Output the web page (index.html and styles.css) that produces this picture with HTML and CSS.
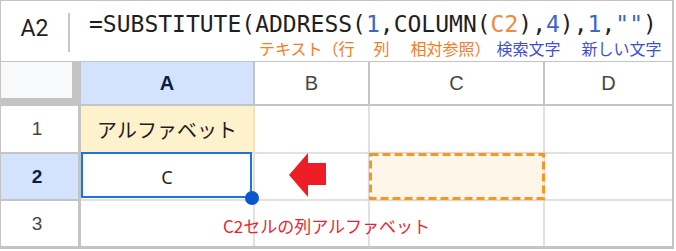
FILE: index.html
```html
<!DOCTYPE html>
<html>
<head>
  <title>SUBSTITUTE ADDRESS</title>
  <meta charset="UTF-8">
  <link rel="stylesheet" href="styles.css">
</head>
<body>
  <div class="sheet">
    <div class="formula-bar">
      <div class="name-box">A2</div>
      <div class="vsep"></div>
      <div class="formula">
        <div class="expr">=SUBSTITUTE(ADDRESS(<span class="num">1</span>,COLUMN(<span class="ref">C2</span>),<span class="num">4</span>),<span class="num">1</span>,<span class="num">""</span>)</div>
        <div class="notes">
          <span class="orange">テキスト（行</span><span class="orange gap1">列</span><span class="orange gap2">相対参照）</span><span class="blue gap3">検索文字</span><span class="blue gap4">新しい文字</span>
        </div>
      </div>
    </div>

    <div class="grid">
      <div class="corner"><div class="corner-box"></div></div>
      <div class="col-head active">A</div>
      <div class="col-head">B</div>
      <div class="col-head">C</div>
      <div class="col-head last">D</div>

      <div class="row-head">1</div>
      <div class="cell label-cell">アルファベット</div>
      <div class="cell"></div>
      <div class="cell"></div>
      <div class="cell last"></div>

      <div class="row-head active">2</div>
      <div class="cell selected">C<span class="handle"></span></div>
      <div class="cell arrow-cell">
        <svg class="arrow" width="38" height="45" viewBox="0 0 38 45">
          <polygon points="0,22 19,0 19,10 37,10 37,32 19,32 19,44" fill="#ee1c25"/>
        </svg>
      </div>
      <div class="cell target">
        <svg class="dash" width="176" height="47" viewBox="0 0 176 47">
          <rect x="1.5" y="1.5" width="173" height="44" fill="#fdf5e8" stroke="#f7971f" stroke-width="3" stroke-dasharray="8 4"/>
        </svg>
      </div>
      <div class="cell last"></div>

      <div class="row-head bottom">3</div>
      <div class="cell bottom note-cell"><span class="note">C2セルの列アルファベット</span></div>
      <div class="cell bottom"></div>
      <div class="cell bottom"></div>
      <div class="cell bottom last"></div>
    </div>
  </div>
</body>
</html>
```

FILE: styles.css
```css
body {
  margin: 0;
  background-color: #fff;
  font-family: "Liberation Sans", Arial, sans-serif;
}
.sheet {
  width: 671px;
  border-top: 1px solid #c4c4c4;
  border-left: 1px solid #c4c4c4;
  border-right: 2px solid #c4c4c4;
  border-bottom: 3px solid #c4c4c4;
}
.formula-bar {
  display: flex;
  align-items: flex-start;
  height: 60px;
  border-bottom: 1px solid #c4c4c4;
}
.name-box {
  width: 67px;
  padding-top: 14px;
  text-align: center;
  font-family: Roboto, sans-serif;
  font-size: 23px;
  line-height: 28px;
  color: #1f1f1f;
}
.vsep {
  width: 2px;
  height: 39px;
  margin-top: 12px;
  background-color: #c8c8c8;
}
.formula {
  padding-left: 19px;
  padding-top: 10px;
}
.expr {
  font-family: "DejaVu Sans Mono", monospace;
  font-size: 23px;
  line-height: 27px;
  color: #1f1f1f;
  white-space: nowrap;
}
.num {
  color: #3b66c6;
}
.ref {
  color: #f08a3c;
}
.notes {
  font-family: "Noto Sans CJK JP", sans-serif;
  font-size: 16px;
  line-height: 20px;
  padding-left: 170px;
  white-space: nowrap;
}
.orange {
  color: #f47c28;
}
.blue {
  color: #3e4fd4;
}
.gap1 {
  margin-left: 19px;
}
.gap2 {
  margin-left: 21px;
}
.gap3 {
  margin-left: 6px;
}
.gap4 {
  margin-left: 21px;
}
.grid {
  display: grid;
  grid-template-columns: 80px 174px 115px 175px 127px;
  grid-template-rows: 44px 48px 47px 45px;
}
.grid > div {
  box-sizing: border-box;
}
.corner {
  background-color: #c4c4c4;
}
.corner-box {
  width: 71px;
  height: 36px;
  background-color: #f8f9fa;
}
.col-head {
  display: flex;
  align-items: center;
  justify-content: center;
  border-right: 2px solid #c4c4c4;
  border-bottom: 2px solid #c4c4c4;
  font-size: 20px;
  color: #444746;
}
.col-head.active {
  background-color: #d3e3fd;
  color: #0b1d45;
  font-weight: bold;
}
.row-head {
  display: flex;
  align-items: center;
  justify-content: center;
  padding-right: 5px;
  border-right: 3px solid #c4c4c4;
  border-bottom: 2px solid #c4c4c4;
  font-size: 19px;
  color: #444746;
}
.row-head.active {
  background-color: #d3e3fd;
  color: #0b1d45;
  font-weight: bold;
}
.cell {
  position: relative;
  display: flex;
  align-items: center;
  justify-content: center;
  border-right: 2px solid #e1e1e1;
  border-bottom: 2px solid #e1e1e1;
}
.last {
  border-right: none;
}
.bottom {
  border-bottom: none;
}
.label-cell {
  background-color: #fef2cd;
  border-right-color: #eee2bf;
  font-family: "Noto Sans CJK JP", sans-serif;
  font-size: 20px;
  color: #1f1f1f;
}
.selected {
  font-family: "Noto Sans", sans-serif;
  font-size: 18px;
  color: #1f1f1f;
}
.selected::before {
  content: "";
  position: absolute;
  top: -2px;
  left: 0;
  right: 1px;
  bottom: 1px;
  border: 2px solid #1a73e8;
}
.handle {
  position: absolute;
  right: -6px;
  bottom: -6px;
  width: 14px;
  height: 14px;
  border-radius: 50%;
  background-color: #0b57d0;
  z-index: 2;
}
.arrow-cell {
  justify-content: flex-start;
  align-items: flex-start;
}
.arrow {
  display: block;
  margin-left: 34px;
  margin-top: -1px;
}
.dash {
  position: absolute;
  top: -1px;
  left: -1px;
  box-shadow: 0 0 2px 2px rgba(0, 0, 0, 0.04);
}
.note-cell {
  justify-content: flex-start;
}
.note {
  position: relative;
  z-index: 1;
  margin-left: 142px;
  margin-top: 4px;
  white-space: nowrap;
  font-family: "Noto Sans CJK JP", sans-serif;
  font-size: 17px;
  color: #ec1f33;
}
```
